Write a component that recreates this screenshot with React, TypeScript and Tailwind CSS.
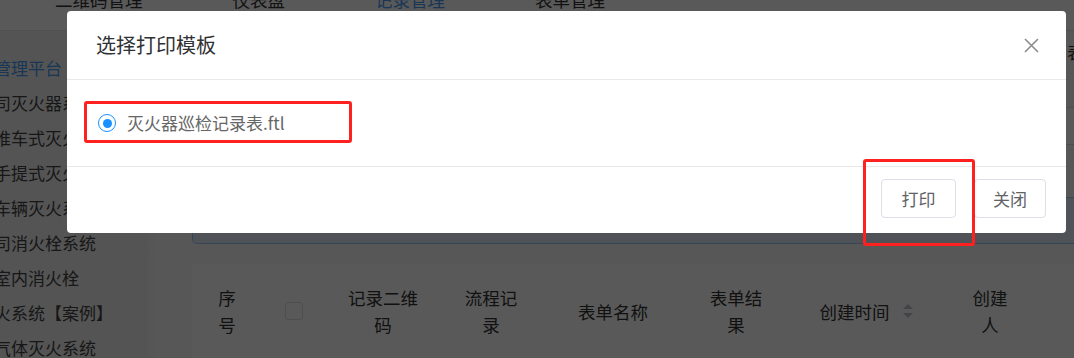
import React from 'react';

const navTabs = [
  { label: '二维码管理', active: false },
  { label: '仪表盘', active: false },
  { label: '记录管理', active: true },
  { label: '表单管理', active: false },
];

const sideItems = [
  { label: '管理平台', active: true },
  { label: '司灭火器系统', active: false },
  { label: '推车式灭火器', active: false },
  { label: '手提式灭火器', active: false },
  { label: '车辆灭火系统', active: false },
  { label: '司消火栓系统', active: false },
  { label: '室内消火栓', active: false },
  { label: '火系统【案例】', active: false },
  { label: '气体灭火系统', active: false },
];

const HeadCell: React.FC<{ w: string; inner?: string; children: React.ReactNode }> = ({ w, inner, children }) => (
  <div className={`${w} shrink-0 flex justify-center`}>
    <div className={`${inner ?? ''} text-center`}>{children}</div>
  </div>
);

const SortIcon = () => (
  <svg width="10" height="14" viewBox="0 0 10 14" className="ml-[13px]">
    <path d="M5 0 L10 5 L0 5 Z" fill="#c0c4cc" />
    <path d="M5 14 L10 9 L0 9 Z" fill="#c0c4cc" />
  </svg>
);

export default function App() {
  return (
    <div className="relative w-[1074px] h-[358px] overflow-hidden bg-white font-['Noto_Sans_CJK_SC','Noto_Sans',sans-serif] text-[#333]">
      {/* underlying page */}
      <header className="h-[31px] border-b border-[#e4e4e4] flex pl-[10px] overflow-hidden">
        {navTabs.map(t => (
          <div
            key={t.label}
            className={`px-[45px] -mt-[9px] text-[17.5px] leading-[17.5px] whitespace-nowrap ${t.active ? 'text-[#4a9cf5]' : 'text-[#333]'}`}
          >
            {t.label}
          </div>
        ))}
      </header>

      <div className="flex h-[327px]">
        <aside className="w-[148px] shrink-0 bg-[#f0f0f0] pt-[19px] overflow-hidden">
          {sideItems.map(it => (
            <div
              key={it.label}
              className={`h-[35px] leading-[35px] -ml-[6px] whitespace-nowrap text-[17px] ${it.active ? 'text-[#4a9cf5]' : 'text-[#444]'}`}
            >
              {it.label}
            </div>
          ))}
        </aside>
        <div className="w-[14px] shrink-0 bg-gradient-to-r from-[#f4f4f4] to-[#fafafa]" />

        <main className="flex-1 min-w-0 bg-[#fafafa] pl-[30px] flex flex-col">
          <div className="mt-[9px] h-[24px] flex">
            <span className="ml-[875px] text-[17.5px] leading-[24px] whitespace-nowrap">表单状态</span>
          </div>
          <div className="mt-[43px] h-[38px] flex">
            <div className="ml-[600px] w-[400px] shrink-0 h-[38px] border border-[#dcdfe6] rounded-[4px] bg-white" />
          </div>
          <div className="mt-[52px] h-[48px] border border-[#9fc9f5] rounded-l-[5px] bg-[#e2eefb] border-r-0" />
          <div className="mt-[20px] flex-1 bg-white">
            <div className="h-[94px] flex items-center text-[17.5px] leading-[27px] text-[#333]">
              <HeadCell w="w-[70px]" inner="w-[20px]">序号</HeadCell>
              <HeadCell w="w-[64px]">
                <div className="w-[18px] h-[18px] border border-[#dcdfe6] rounded-[3px] bg-white" />
              </HeadCell>
              <HeadCell w="w-[114px]" inner="w-[72px]">记录二维码</HeadCell>
              <HeadCell w="w-[102px]" inner="w-[56px]">流程记录</HeadCell>
              <HeadCell w="w-[142px]">表单名称</HeadCell>
              <HeadCell w="w-[104px]" inner="w-[56px]">表单结果</HeadCell>
              <HeadCell w="w-[156px]">
                <div className="flex items-center">
                  <span>创建时间</span>
                  <SortIcon />
                </div>
              </HeadCell>
              <HeadCell w="w-[92px]" inner="w-[40px]">创建人</HeadCell>
            </div>
          </div>
        </main>
      </div>

      {/* mask */}
      <div className="absolute inset-0 bg-black/[0.65]" />

      {/* dialog */}
      <div className="absolute left-[67px] top-[11px] w-[999px] h-[222px] bg-white rounded-[4px] flex flex-col">
        <div className="h-[69px] shrink-0 flex items-center justify-between pl-[29px] pr-[27px] border-b border-[#e8e8e8]">
          <span className="text-[20px] leading-[20px] text-[#303133]">选择打印模板</span>
          <svg width="15" height="15" viewBox="0 0 15 15">
            <path d="M1 1 L14 14 M14 1 L1 14" stroke="#8c8c8c" strokeWidth="1.6" />
          </svg>
        </div>
        <div className="h-[87px] shrink-0 flex items-center pl-[31px] border-b border-[#e8e8e8]">
          <span className="w-[18px] h-[18px] rounded-full border-[1.5px] border-[#1890ff] flex items-center justify-center">
            <span className="w-[9px] h-[9px] rounded-full bg-[#1890ff]" />
          </span>
          <span className="ml-[11px] text-[17px] leading-[20px] text-[#666]">灭火器巡检记录表.ftl</span>
        </div>
        <div className="flex-1 flex justify-end items-start pt-[12px] pr-[20px] gap-[18px]">
          <button className="w-[75px] h-[39px] border border-[#dcdfe6] rounded-[4px] bg-white text-[17px] text-[#606266]">
            打印
          </button>
          <button className="w-[72px] h-[39px] border border-[#dcdfe6] rounded-[4px] bg-white text-[17px] text-[#606266]">
            关闭
          </button>
        </div>
      </div>

      {/* annotation boxes */}
      <div className="absolute left-[84px] top-[101px] w-[268px] h-[42px] border-[3px] border-[#ff2020] rounded-[3px]" />
      <div className="absolute left-[863px] top-[159px] w-[112px] h-[87px] border-[3px] border-[#ff2020] rounded-[3px]" />
    </div>
  );
}
